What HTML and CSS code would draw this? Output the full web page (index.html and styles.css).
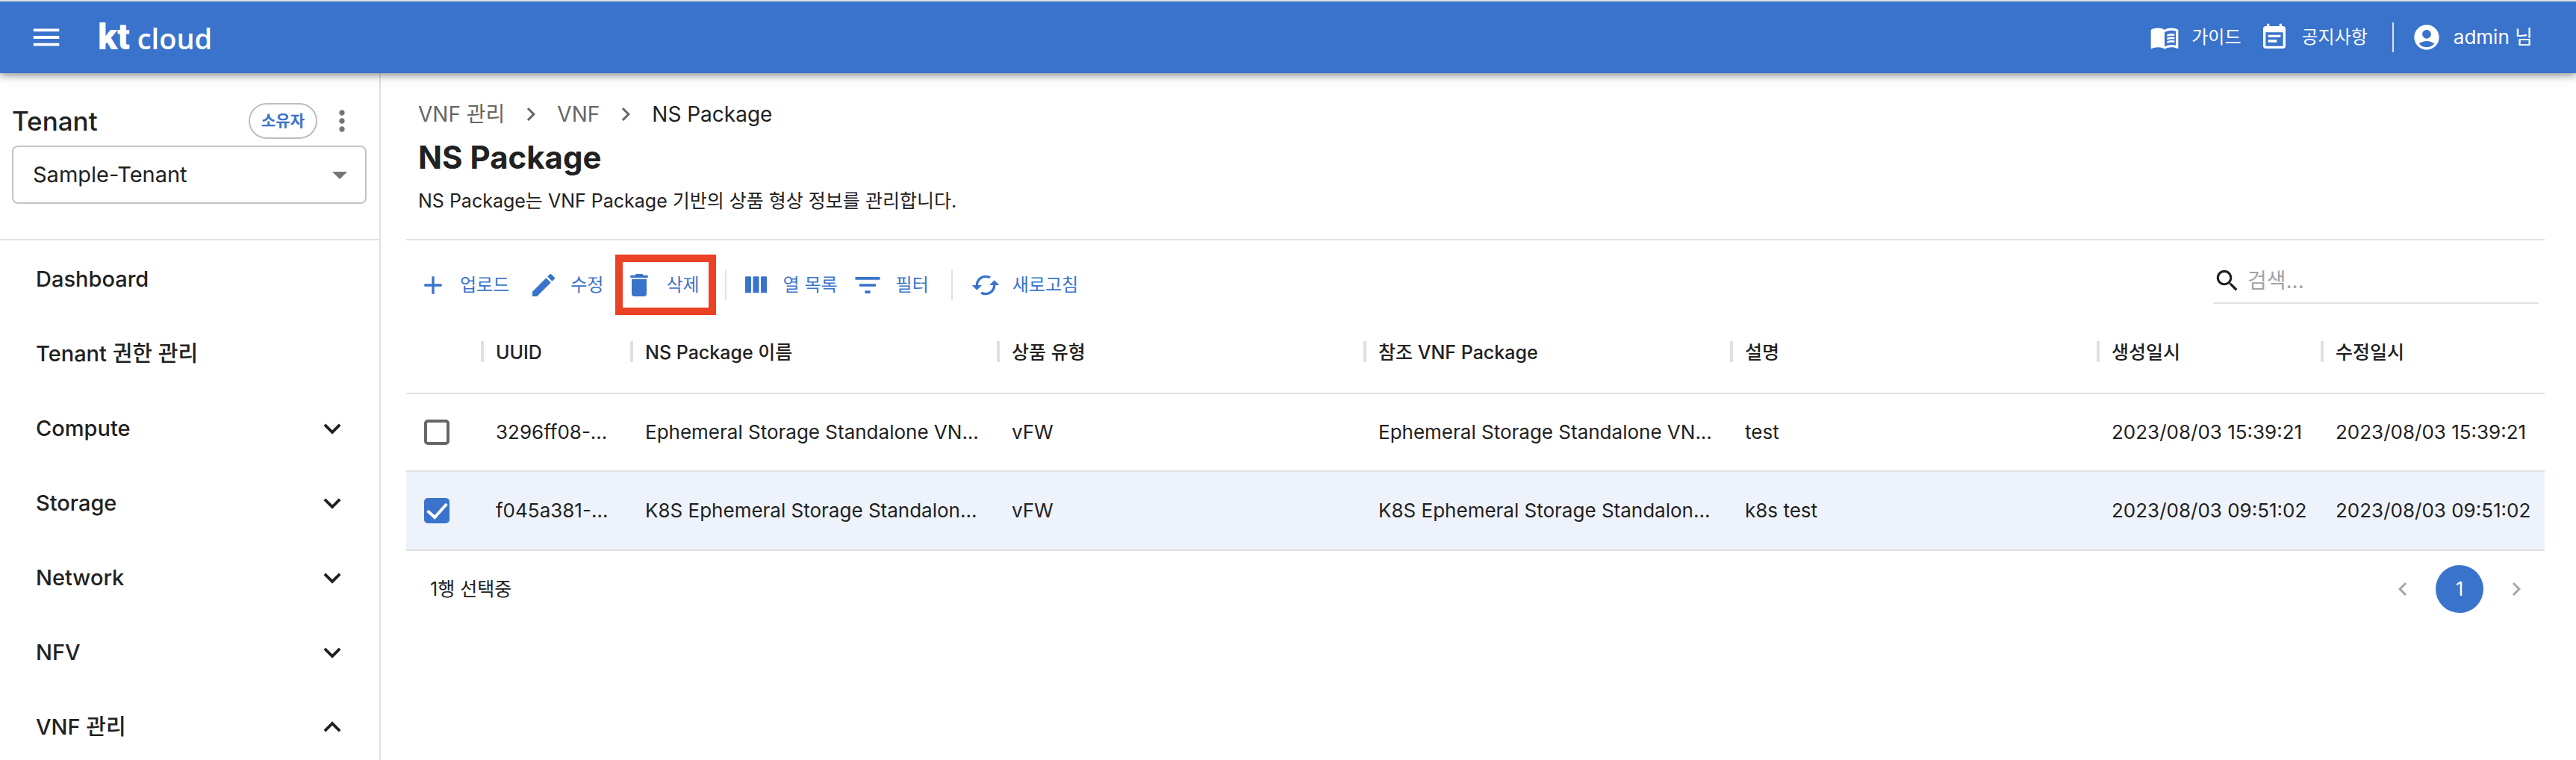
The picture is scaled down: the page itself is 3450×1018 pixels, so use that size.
FILE: index.html
```html
<!DOCTYPE html>
<html lang="ko">
<head>
<meta charset="utf-8">
<meta name="viewport" content="width=device-width, initial-scale=1">
<title>NS Package</title>
<link rel="stylesheet" href="styles.css">
</head>
<body>
<svg class="sprite" aria-hidden="true">
  <symbol id="down" viewBox="0 0 24 24"><path d="M7.41 8.59 12 13.17l4.59-4.58L18 10l-6 6-6-6z"/></symbol>
  <symbol id="up" viewBox="0 0 24 24"><path d="M7.41 15.41 12 10.83l4.59 4.58L18 14l-6-6-6 6z"/></symbol>
  <symbol id="right" viewBox="0 0 24 24"><path d="M10 6 8.59 7.41 13.17 12l-4.58 4.59L10 18l6-6z"/></symbol>
  <symbol id="left" viewBox="0 0 24 24"><path d="M15.41 7.41 14 6l-6 6 6 6 1.41-1.41L10.83 12z"/></symbol>
</svg>
<header class="appbar">
  <button class="icon-button" aria-label="메뉴"><svg class="menu-icon" viewBox="0 0 24 24"><path d="M3 18h18v-2H3v2zm0-5h18v-2H3v2zm0-7v2h18V6H3z"/></svg></button>
  <a class="logo" href="#"><span class="logo-kt">kt</span><span class="logo-cloud">cloud</span></a>
  <nav class="appbar-links">
    <a class="appbar-link" href="#"><svg viewBox="0 0 24 24"><path d="M17.5 4.5c-1.95 0-4.05.4-5.5 1.5-1.45-1.1-3.55-1.5-5.5-1.5S2.45 4.9 1 6v14.65c0 .65.73.45.75.45C3.1 20.45 5.05 20 6.5 20c1.95 0 4.05.4 5.5 1.5 1.35-.85 3.8-1.5 5.5-1.5 1.65 0 3.35.3 4.75 1.05.41.21.75-.19.75-.45V6c-1.49-1.12-3.63-1.5-5.5-1.5zm3.5 14c-1.1-.35-2.3-.5-3.5-.5-1.7 0-4.15.65-5.5 1.5V8c1.35-.85 3.8-1.5 5.5-1.5 1.2 0 2.4.15 3.5.5v11.5z"/><path d="M14 9.8c2-.8 4.2-.9 6-.5v1.5c-2-.4-4-.3-6 .6zm0 2.7c2-.8 4.2-.9 6-.5v1.5c-2-.4-4-.3-6 .6zm0 2.7c2-.8 4.2-.9 6-.5v1.5c-2-.4-4-.3-6 .6z"/></svg><span>가이드</span></a>
    <a class="appbar-link" href="#"><svg viewBox="0 0 24 24"><path d="M17 10H7v2h10v-2zm2-7h-1V1h-2v2H8V1H6v2H5c-1.11 0-1.99.9-1.99 2L3 19c0 1.1.89 2 2 2h14c1.1 0 2-.9 2-2V5c0-1.1-.9-2-2-2zm0 16H5V8h14v11zm-5-5H7v2h7v-2z"/></svg><span>공지사항</span></a>
    <a class="appbar-link user" href="#"><svg viewBox="0 0 24 24"><path d="M12 2C6.48 2 2 6.48 2 12s4.48 10 10 10 10-4.48 10-10S17.52 2 12 2zm0 4c1.93 0 3.5 1.57 3.5 3.5S13.93 13 12 13s-3.5-1.57-3.5-3.5S10.07 6 12 6zm0 14c-2.03 0-4.43-.82-6.14-2.88C7.55 15.8 9.68 15 12 15s4.45.8 6.14 2.12C16.43 19.18 14.03 20 12 20z"/></svg><span>admin 님</span></a>
  </nav>
</header>
<div class="layout">
  <aside class="sidebar">
    <section class="tenant">
      <div class="tenant-head">
        <label class="tenant-title" for="tenant">Tenant</label>
        <span class="chip">소유자</span>
        <button class="icon-button" aria-label="더보기"><svg class="more-icon" viewBox="0 0 24 24"><path d="M12 8c1.1 0 2-.9 2-2s-.9-2-2-2-2 .9-2 2 .9 2 2 2zm0 2c-1.1 0-2 .9-2 2s.9 2 2 2 2-.9 2-2-.9-2-2-2zm0 6c-1.1 0-2 .9-2 2s.9 2 2 2 2-.9 2-2-.9-2-2-2z"/></svg></button>
      </div>
      <div class="select-box">
        <select id="tenant"><option>Sample-Tenant</option></select>
        <svg class="select-arrow" viewBox="0 0 24 24"><path d="m7 10 5 5 5-5z"/></svg>
      </div>
    </section>
    <nav class="side-nav">
      <a href="#">Dashboard</a>
      <a href="#">Tenant 권한 관리</a>
      <a href="#">Compute<svg><use href="#down"/></svg></a>
      <a href="#">Storage<svg><use href="#down"/></svg></a>
      <a href="#">Network<svg><use href="#down"/></svg></a>
      <a href="#">NFV<svg><use href="#down"/></svg></a>
      <a href="#">VNF 관리<svg><use href="#up"/></svg></a>
    </nav>
  </aside>
  <main class="content">
    <div class="page-head">
      <nav class="breadcrumbs">
        <a href="#">VNF 관리</a><svg><use href="#right"/></svg><a href="#">VNF</a><svg><use href="#right"/></svg><span class="current">NS Package</span>
      </nav>
      <h1>NS Package</h1>
      <p>NS Package는 VNF Package 기반의 상품 형상 정보를 관리합니다.</p>
    </div>
    <div class="toolbar">
      <div class="actions">
        <button class="action"><svg viewBox="0 0 24 24"><path d="M19 13h-6v6h-2v-6H5v-2h6V5h2v6h6z"/></svg>업로드</button>
        <button class="action"><svg viewBox="0 0 24 24"><path d="M3 17.25V21h3.75L17.81 9.94l-3.75-3.75L3 17.25zM20.71 7.04c.39-.39.39-1.02 0-1.41l-2.34-2.34a.9959.9959 0 0 0-1.41 0l-1.83 1.83 3.75 3.75 1.83-1.83z"/></svg>수정</button>
        <button class="action marked"><svg viewBox="0 0 24 24"><path d="M6 19c0 1.1.9 2 2 2h8c1.1 0 2-.9 2-2V7H6v12zM19 4h-3.5l-1-1h-5l-1 1H5v2h14V4z"/></svg>삭제</button>
      </div>
      <div class="actions columns">
        <button class="action"><svg viewBox="0 0 24 24"><rect x="3" y="5" width="4.8" height="13.2" rx=".7"/><rect x="9.3" y="5" width="4.8" height="13.2" rx=".7"/><rect x="15.6" y="5" width="4.8" height="13.2" rx=".7"/></svg>열 목록</button>
        <button class="action filter"><svg viewBox="0 0 24 24"><path d="M10 18h4v-2h-4v2zM3 6v2h18V6H3zm3 7h12v-2H6v2z"/></svg>필터</button>
      </div>
      <div class="actions">
        <button class="action"><svg viewBox="0 0 24 24"><path d="m19 8-4 4h3c0 3.31-2.69 6-6 6-1.01 0-1.97-.25-2.8-.7l-1.46 1.46C8.97 19.54 10.43 20 12 20c4.42 0 8-3.58 8-8h3l-4-4zM6 12c0-3.31 2.69-6 6-6 1.01 0 1.97.25 2.8.7l1.46-1.46C15.03 4.46 13.57 4 12 4c-4.42 0-8 3.58-8 8H1l4 4 4-4H6z"/></svg>새로고침</button>
      </div>
      <label class="search"><svg viewBox="0 0 24 24"><path d="M15.5 14h-.79l-.28-.27C15.41 12.59 16 11.11 16 9.5 16 5.91 13.09 3 9.5 3S3 5.91 3 9.5 5.91 16 9.5 16c1.61 0 3.09-.59 4.23-1.57l.27.28v.79l5 4.99L20.49 19l-4.99-5zm-6 0C7.01 14 5 11.99 5 9.5S7.01 5 9.5 5 14 7.01 14 9.5 11.99 14 9.5 14z"/></svg><input type="search" placeholder="검색..." aria-label="검색"></label>
    </div>
    <table class="grid">
      <colgroup><col class="c-check"><col class="c-id"><col><col><col><col><col class="c-date"><col class="c-date"></colgroup>
      <thead><tr><td></td><th>UUID</th><th>NS Package 이름</th><th>상품 유형</th><th>참조 VNF Package</th><th>설명</th><th>생성일시</th><th>수정일시</th></tr></thead>
      <tbody>
        <tr><td><input type="checkbox" aria-label="행 선택"></td><td>3296ff08-...</td><td>Ephemeral Storage Standalone VN...</td><td>vFW</td><td>Ephemeral Storage Standalone VN...</td><td>test</td><td>2023/08/03 15:39:21</td><td>2023/08/03 15:39:21</td></tr>
        <tr class="selected"><td><input type="checkbox" aria-label="행 선택" checked></td><td>f045a381-...</td><td>K8S Ephemeral Storage Standalon...</td><td>vFW</td><td>K8S Ephemeral Storage Standalon...</td><td>k8s test</td><td>2023/08/03 09:51:02</td><td>2023/08/03 09:51:02</td></tr>
      </tbody>
    </table>
    <div class="grid-footer">
      <span>1행 선택중</span>
      <nav class="pagination">
        <button aria-label="이전" disabled><svg><use href="#left"/></svg></button>
        <button class="page">1</button>
        <button aria-label="다음" disabled><svg><use href="#right"/></svg></button>
      </nav>
    </div>
  </main>
</div>
</body>
</html>
```
FILE: styles.css
```css
:root {
  --blue: #3973cc;
  --text: #212121;
  --line: #e0e0e0;
}

* { box-sizing: border-box; }

body {
  margin: 0;
  background: #fff;
  color: var(--text);
  font: 26px/40px Inter, "Noto Sans CJK KR", sans-serif;
}

a { color: inherit; text-decoration: none; }

button, input, select { font: inherit; color: inherit; }

button { padding: 0; border: 0; background: none; cursor: pointer; }

svg { display: block; flex: none; fill: currentColor; }

.sprite { position: absolute; width: 0; height: 0; }

.appbar {
  position: relative;
  z-index: 1;
  display: flex;
  align-items: center;
  height: 98px;
  padding: 0 58px 0 39px;
  border-top: 2px solid #dcdcde;
  background: var(--blue);
  color: #fff;
  box-shadow: 0 4px 8px rgba(0, 0, 0, .3), 0 2px 20px rgba(0, 0, 0, .12);
}

.menu-icon { width: 46px; height: 46px; }

.logo {
  display: flex;
  align-items: baseline;
  gap: 10px;
  margin-left: 46px;
}

.logo-kt { font: 900 48px/56px Roboto, sans-serif; }

.logo-cloud { font: 600 38px/56px "Open Sans", sans-serif; }

.appbar-links { display: flex; align-items: center; gap: 25px; margin-left: auto; }

.appbar-link { display: flex; align-items: center; gap: 16px; font-size: 24px; }

.appbar-link svg { width: 40px; height: 40px; }

.appbar-link.user {
  margin-left: 8px;
  padding-left: 24px;
  border-left: 2px solid var(--line);
  font-size: 26px;
}

.layout { display: flex; min-height: calc(100vh - 98px); }

.sidebar { flex: none; width: 510px; border-right: 2px solid var(--line); }

.tenant { height: 224px; padding: 40px 17px 0 16px; border-bottom: 2px solid var(--line); }

.tenant-head { display: flex; align-items: center; height: 48px; margin-bottom: 9px; }

.tenant-title { margin-right: auto; font-size: 35px; font-weight: 500; }

.chip {
  padding: 2px 15px;
  border: 2px solid #bdbdbd;
  border-radius: 24px;
  color: var(--blue);
  font-size: 21px;
  font-weight: 600;
}

.more-icon { width: 44px; height: 44px; margin: 0 11px; color: #757575; }

.select-box { position: relative; }

.select-box select {
  appearance: none;
  width: 100%;
  height: 78px;
  padding: 0 26px;
  border: 2px solid #c4c4c4;
  border-radius: 8px;
  background: none;
  font-size: 29px;
}

.select-arrow {
  position: absolute;
  top: 15px;
  right: 12px;
  width: 48px;
  height: 48px;
  color: #757575;
  pointer-events: none;
}

.side-nav { display: flex; flex-direction: column; padding-top: 2px; }

.side-nav a {
  display: flex;
  align-items: center;
  justify-content: space-between;
  height: 100px;
  padding: 0 40px 0 48px;
  font-size: 29px;
  font-weight: 500;
}

.side-nav svg { width: 46px; height: 46px; }

.content { flex: 1; min-width: 0; padding: 0 42px 0 34px; }

.page-head { height: 224px; padding: 35px 16px 0; border-bottom: 2px solid var(--line); }

.breadcrumbs { display: flex; align-items: center; gap: 17px; color: #666; font-size: 28px; }

.breadcrumbs svg { width: 36px; height: 36px; }

.breadcrumbs .current { color: var(--text); }

h1 { margin: 8px 0; font-size: 42px; font-weight: 700; line-height: 60px; }

p { margin: 0; font-size: 25px; }

.toolbar { display: flex; align-items: center; height: 110px; padding: 0 8px 0 16px; }

.actions { display: flex; align-items: center; gap: 26px; height: 40px; margin-top: 9px; }

.actions + .actions { margin-left: 30px; padding-left: 24px; border-left: 2px solid var(--line); }

.actions.columns { gap: 18px; margin-left: 12px; padding-left: 20px; }

.action { display: flex; align-items: center; gap: 16px; color: var(--blue); font-size: 24px; white-space: nowrap; }

.action svg { width: 40px; height: 40px; }

.action.filter svg { width: 44px; height: 44px; }

.action.marked { height: 81px; margin-left: -10px; padding: 0 12px 0 2px; border: 10px solid #eb4125; }

.search {
  display: flex;
  align-items: center;
  gap: 8px;
  width: 436px;
  height: 60px;
  margin-left: auto;
  border-bottom: 2px solid var(--line);
}

.search svg { width: 38px; height: 38px; }

.search input { width: 100%; min-width: 0; padding: 0; border: 0; outline: 0; background: none; font-size: 28px; }

.search input::placeholder { color: #a3a3a3; }

.grid { width: 100%; border-collapse: separate; border-spacing: 0; table-layout: fixed; }

.c-check { width: 100px; }

.c-id { width: 200px; }

.c-date { width: 300px; }

.grid th, .grid td {
  padding: 0 0 0 20px;
  border-bottom: 2px solid var(--line);
  text-align: left;
  white-space: nowrap;
}

.grid th {
  height: 96px;
  padding-bottom: 14px;
  background: linear-gradient(var(--line), var(--line)) left 25px / 4px 28px no-repeat;
  font-size: 25px;
  font-weight: 500;
}

.grid tbody td { height: 104px; }

.grid tbody tr:last-child td { height: 106px; }

.grid .selected td { background: #eef3fb; }

.grid input {
  display: grid;
  place-items: center;
  appearance: none;
  width: 34px;
  height: 34px;
  margin: 0 4px;
  border: 4px solid #666;
  border-radius: 5px;
}

.grid input:checked { border-color: var(--blue); background: var(--blue); }

.grid input:checked::after {
  content: "";
  width: 11px;
  height: 22px;
  margin-top: -6px;
  border: solid #fff;
  border-width: 0 4px 4px 0;
  transform: rotate(42deg);
}

.grid-footer {
  display: flex;
  align-items: center;
  justify-content: space-between;
  height: 102px;
  padding: 0 16px 0 32px;
  font-size: 25px;
}

.pagination { display: flex; align-items: center; gap: 22px; }

.pagination svg { width: 36px; height: 36px; margin: 0 4px; color: #a6a6a6; }

.pagination .page { width: 64px; height: 64px; border-radius: 50%; background: var(--blue); color: #fff; }
```
